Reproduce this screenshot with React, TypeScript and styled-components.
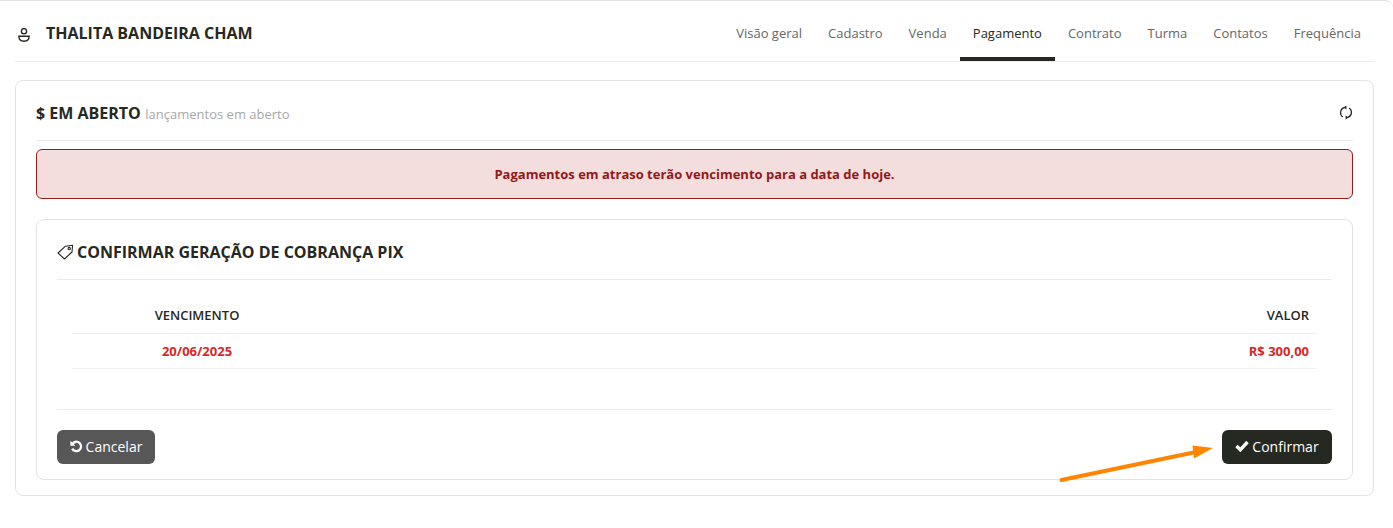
import React from "react";
import styled, { createGlobalStyle } from "styled-components";

const Global = createGlobalStyle`
  html, body { margin: 0; padding: 0; background: #fff; }
  body { font-family: "Open Sans", "Noto Sans", sans-serif; color: #262822; }
  * { box-sizing: border-box; }
`;

const Page = styled.div`
  position: relative;
  width: 1393px;
  height: 528px;
  padding: 0 19px 0 15px;
  border-top: 1px solid #e4e4e4;
  border-top-right-radius: 8px;
  overflow: hidden;
`;

const Header = styled.header`
  height: 61px;
  display: flex;
  align-items: stretch;
  justify-content: space-between;
  border-bottom: 1px solid #ececec;
`;

const Person = styled.div`
  display: flex;
  align-items: center;
  gap: 16px;
  padding: 0 0 0 3px;
`;

const PersonGlyph = styled.svg`
  margin-top: 8px;
`;

const PersonName = styled.h1`
  margin: 3px 0 0;
  font-size: 16px;
  font-weight: 700;
  color: #262822;
`;

const Tabs = styled.nav`
  display: flex;
  height: 60px;
`;

const Tab = styled.div<{ $active?: boolean }>`
  display: flex;
  align-items: center;
  padding: 7px 13px 0;
  height: 60px;
  font-size: 13px;
  color: ${(p) => (p.$active ? "#262822" : "#666")};
  border-bottom: 4px solid ${(p) => (p.$active ? "#262822" : "transparent")};
`;

const Card = styled.section`
  margin-top: 18px;
  height: 416px;
  padding: 0 20px;
  border: 1px solid #e3e3e3;
  border-radius: 8px;
`;

const CardHeader = styled.div`
  height: 60px;
  display: flex;
  align-items: center;
  justify-content: space-between;
  border-bottom: 1px solid #ececec;
  padding: 4px 0 0;
`;

const Title = styled.div`
  display: flex;
  align-items: baseline;
  gap: 4.5px;
`;

const TitleStrong = styled.span`
  font-size: 16px;
  font-weight: 700;
`;

const TitleSub = styled.span`
  font-size: 13px;
  color: #a8a8a8;
`;

const Alert = styled.div`
  margin-top: 8px;
  height: 50px;
  display: flex;
  align-items: center;
  justify-content: center;
  background: #f3dddd;
  border: 1px solid #9c1c1c;
  border-radius: 6px;
  color: #931818;
  font-size: 13px;
  font-weight: 700;
`;

const Inner = styled.section`
  margin-top: 20px;
  height: 261px;
  padding: 0 20px;
  border: 1px solid #e3e3e3;
  border-radius: 8px;
`;

const InnerHeader = styled.div`
  height: 60px;
  display: flex;
  align-items: center;
  gap: 3px;
  border-bottom: 1px solid #ececec;
  padding-top: 5px;
`;

const InnerTitle = styled.h2`
  margin: 0;
  font-size: 16px;
  font-weight: 700;
`;

const Table = styled.div`
  margin: 18px 15px 0;
`;

const Row = styled.div<{ $head?: boolean }>`
  height: ${(p) => (p.$head ? "36px" : "35px")};
  padding-bottom: ${(p) => (p.$head ? "2px" : "0")};
  display: flex;
  align-items: center;
  justify-content: space-between;
  border-bottom: 1px solid #f0f0f0;
  font-size: 13px;
  font-weight: ${(p) => (p.$head ? 600 : 700)};
  color: ${(p) => (p.$head ? "#262822" : "#d62828")};
`;

const DateCell = styled.div`
  width: 250px;
  text-align: center;
`;

const ValueCell = styled.div`
  padding-right: 8px;
`;

const Footer = styled.div`
  margin-top: 40px;
  height: 71px;
  border-top: 1px solid #ececec;
  display: flex;
  align-items: center;
  justify-content: space-between;
  padding-top: 4px;
`;

const Button = styled.button<{ $primary?: boolean }>`
  height: 34px;
  width: ${(p) => (p.$primary ? "110px" : "98px")};
  display: inline-flex;
  align-items: center;
  justify-content: center;
  gap: 3px;
  padding: 0 0 2px;
  border: none;
  border-radius: 6px;
  background: ${(p) => (p.$primary ? "#262822" : "#575757")};
  color: #fff;
  font-family: inherit;
  font-size: 14px;
`;

const Arrow = styled.svg`
  position: absolute;
  left: 1050px;
  top: 435px;
`;

const PersonIcon = () => (
  <PersonGlyph width="12" height="14" viewBox="0 0 12 14" fill="none" stroke="#262822" strokeWidth="1.4">
    <circle cx="6" cy="3.2" r="2.6" />
    <path d="M0.9 8.2h10.2c0 3-2.1 5-5.1 5S0.9 11.2 0.9 8.2z" />
  </PersonGlyph>
);

const SyncIcon = () => (
  <svg width="14" height="15" viewBox="0 0 14 15" fill="none" stroke="#262822" strokeWidth="1.2">
    <path d="M5 2.6A5.4 5.4 0 0 0 3.8 12" />
    <path d="M9 12.4A5.4 5.4 0 0 0 10.2 3" />
    <path d="M7.4 0.4L4.4 2.6l3 1.8z" fill="#262822" stroke="none" />
    <path d="M6.6 14.6l3-2.2-3-1.8z" fill="#262822" stroke="none" />
  </svg>
);

const TagIcon = () => (
  <svg width="17" height="16" viewBox="0 0 17 16" fill="none" stroke="#262822" strokeWidth="1.1" strokeLinejoin="round">
    <path d="M1 9L8.5 2.2 15.6 1.2 15 8 7.5 15z" />
    <circle cx="12.2" cy="4.6" r="1.2" />
  </svg>
);

const UndoIcon = () => (
  <svg width="13" height="13" viewBox="0 0 13 13" fill="none" stroke="#fff" strokeWidth="2.3">
    <path d="M2.6 3.6A4.7 4.7 0 1 1 2.2 8.6" />
    <path d="M0.4 0.8v5h5z" fill="#fff" stroke="none" />
  </svg>
);

const CheckIcon = () => (
  <svg width="14" height="12" viewBox="0 0 14 12" fill="none" stroke="#fff" strokeWidth="3.4">
    <path d="M1.5 6l3.8 3.8L12.5 2" />
  </svg>
);

const tabs = ["Visão geral", "Cadastro", "Venda", "Pagamento", "Contrato", "Turma", "Contatos", "Frequência"];

export default function App() {
  return (
    <>
      <Global />
      <Page>
        <Header>
          <Person>
            <PersonIcon />
            <PersonName>THALITA BANDEIRA CHAM</PersonName>
          </Person>
          <Tabs>
            {tabs.map((t) => (
              <Tab key={t} $active={t === "Pagamento"}>{t}</Tab>
            ))}
          </Tabs>
        </Header>
        <Card>
          <CardHeader>
            <Title>
              <TitleStrong>$ EM ABERTO</TitleStrong>
              <TitleSub>lançamentos em aberto</TitleSub>
            </Title>
            <SyncIcon />
          </CardHeader>
          <Alert>Pagamentos em atraso terão vencimento para a data de hoje.</Alert>
          <Inner>
            <InnerHeader>
              <TagIcon />
              <InnerTitle>CONFIRMAR GERAÇÃO DE COBRANÇA PIX</InnerTitle>
            </InnerHeader>
            <Table>
              <Row $head>
                <DateCell>VENCIMENTO</DateCell>
                <ValueCell>VALOR</ValueCell>
              </Row>
              <Row>
                <DateCell>20/06/2025</DateCell>
                <ValueCell>R$ 300,00</ValueCell>
              </Row>
            </Table>
            <Footer>
              <Button><UndoIcon />Cancelar</Button>
              <Button $primary><CheckIcon />Confirmar</Button>
            </Footer>
          </Inner>
        </Card>
        <Arrow width="170" height="50" viewBox="0 0 170 50">
          <path d="M11.5 44L146 16" stroke="#ff8500" strokeWidth="4" strokeLinecap="round" fill="none" />
          <path d="M163 12L142.5 9.5l1.5 13z" fill="#ff8500" />
        </Arrow>
      </Page>
    </>
  );
}
